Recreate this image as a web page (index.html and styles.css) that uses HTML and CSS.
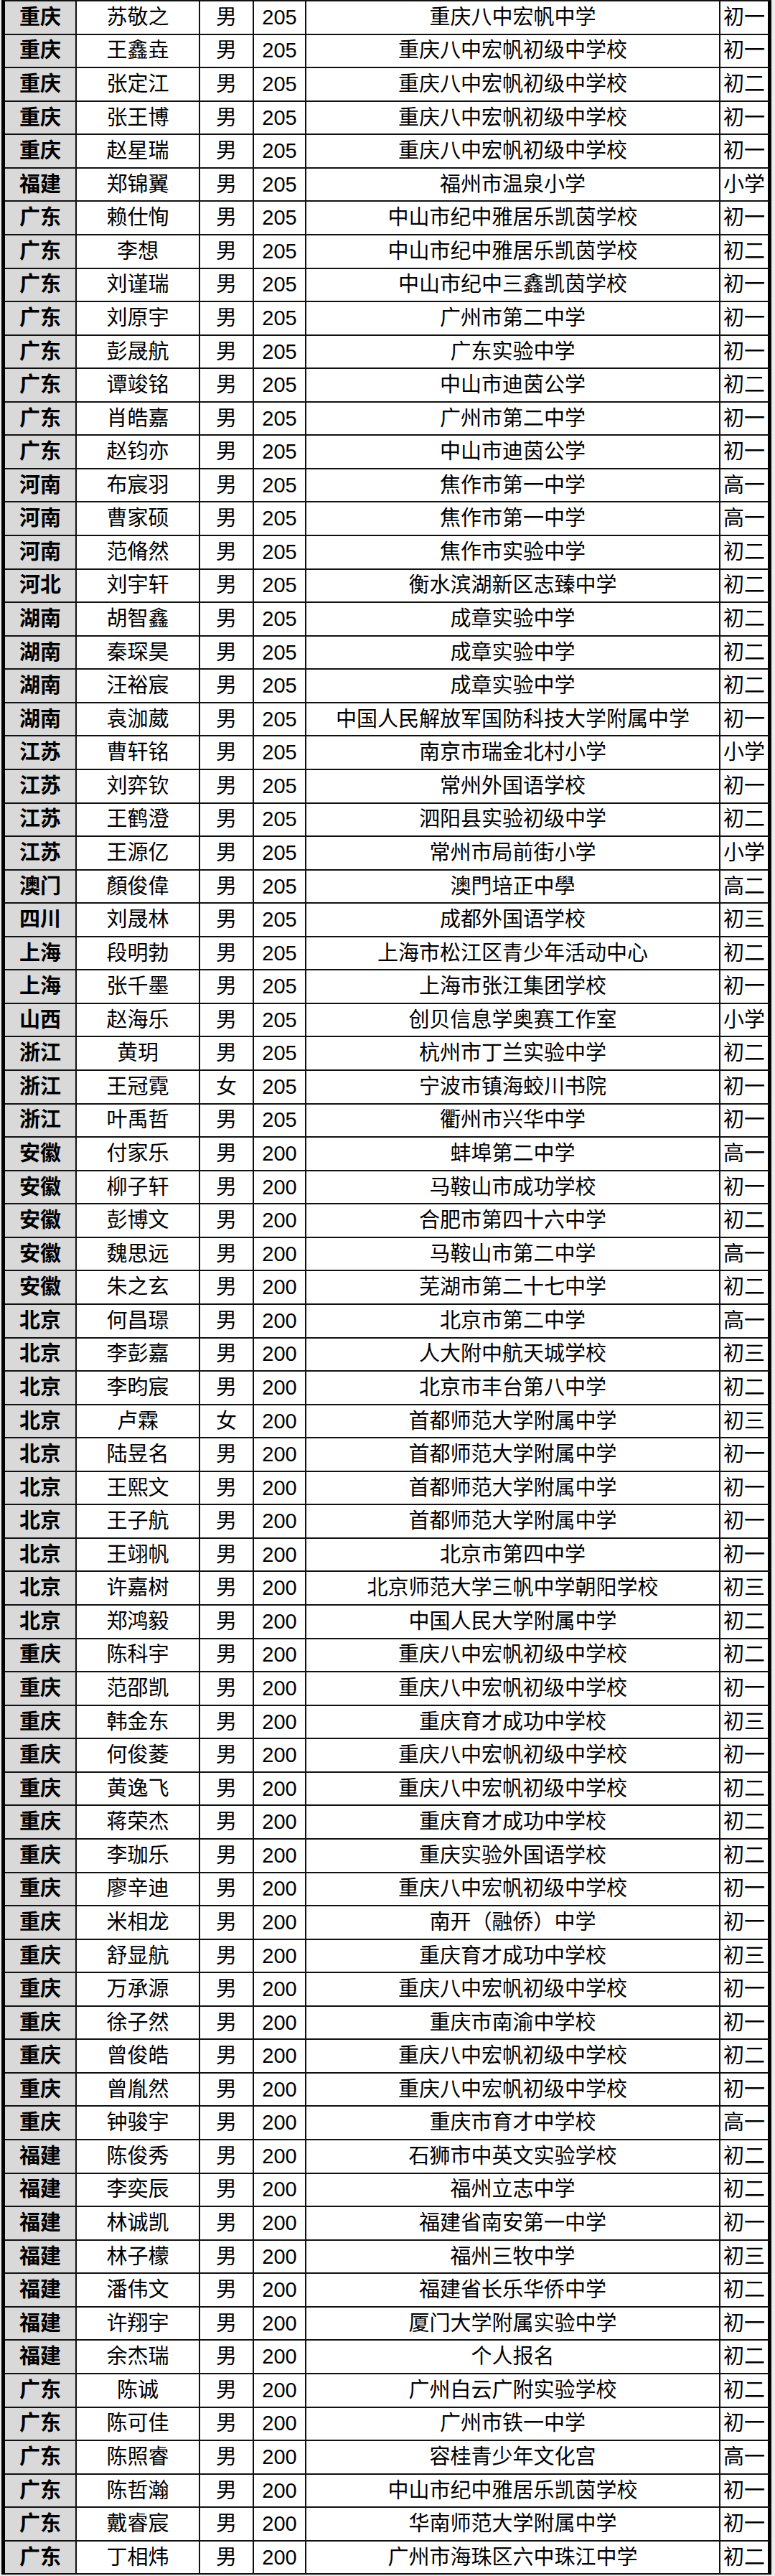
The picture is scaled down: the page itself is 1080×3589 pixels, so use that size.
FILE: index.html
```html
<!DOCTYPE html>
<html lang="zh-CN">
<head>
<meta charset="utf-8">
<title>名单</title>
<link rel="stylesheet" href="styles.css">
</head>
<body>
<table class="list">
<colgroup>
<col class="c-prov"><col class="c-name"><col class="c-sex"><col class="c-score"><col class="c-school"><col class="c-grade">
</colgroup>
<tbody>
<tr><td class="prov">重庆</td><td>苏敬之</td><td>男</td><td class="num">205</td><td>重庆八中宏帆中学</td><td class="grade">初一</td></tr>
<tr><td class="prov">重庆</td><td>王鑫垚</td><td>男</td><td class="num">205</td><td>重庆八中宏帆初级中学校</td><td class="grade">初一</td></tr>
<tr><td class="prov">重庆</td><td>张定江</td><td>男</td><td class="num">205</td><td>重庆八中宏帆初级中学校</td><td class="grade">初二</td></tr>
<tr><td class="prov">重庆</td><td>张王博</td><td>男</td><td class="num">205</td><td>重庆八中宏帆初级中学校</td><td class="grade">初一</td></tr>
<tr><td class="prov">重庆</td><td>赵星瑞</td><td>男</td><td class="num">205</td><td>重庆八中宏帆初级中学校</td><td class="grade">初一</td></tr>
<tr><td class="prov">福建</td><td>郑锦翼</td><td>男</td><td class="num">205</td><td>福州市温泉小学</td><td class="grade">小学</td></tr>
<tr><td class="prov">广东</td><td>赖仕恂</td><td>男</td><td class="num">205</td><td>中山市纪中雅居乐凯茵学校</td><td class="grade">初一</td></tr>
<tr><td class="prov">广东</td><td>李想</td><td>男</td><td class="num">205</td><td>中山市纪中雅居乐凯茵学校</td><td class="grade">初二</td></tr>
<tr><td class="prov">广东</td><td>刘谨瑞</td><td>男</td><td class="num">205</td><td>中山市纪中三鑫凯茵学校</td><td class="grade">初一</td></tr>
<tr><td class="prov">广东</td><td>刘原宇</td><td>男</td><td class="num">205</td><td>广州市第二中学</td><td class="grade">初一</td></tr>
<tr><td class="prov">广东</td><td>彭晟航</td><td>男</td><td class="num">205</td><td>广东实验中学</td><td class="grade">初一</td></tr>
<tr><td class="prov">广东</td><td>谭竣铭</td><td>男</td><td class="num">205</td><td>中山市迪茵公学</td><td class="grade">初二</td></tr>
<tr><td class="prov">广东</td><td>肖皓嘉</td><td>男</td><td class="num">205</td><td>广州市第二中学</td><td class="grade">初一</td></tr>
<tr><td class="prov">广东</td><td>赵钧亦</td><td>男</td><td class="num">205</td><td>中山市迪茵公学</td><td class="grade">初一</td></tr>
<tr><td class="prov">河南</td><td>布宸羽</td><td>男</td><td class="num">205</td><td>焦作市第一中学</td><td class="grade">高一</td></tr>
<tr><td class="prov">河南</td><td>曹家硕</td><td>男</td><td class="num">205</td><td>焦作市第一中学</td><td class="grade">高一</td></tr>
<tr><td class="prov">河南</td><td>范脩然</td><td>男</td><td class="num">205</td><td>焦作市实验中学</td><td class="grade">初二</td></tr>
<tr><td class="prov">河北</td><td>刘宇轩</td><td>男</td><td class="num">205</td><td>衡水滨湖新区志臻中学</td><td class="grade">初二</td></tr>
<tr><td class="prov">湖南</td><td>胡智鑫</td><td>男</td><td class="num">205</td><td>成章实验中学</td><td class="grade">初二</td></tr>
<tr><td class="prov">湖南</td><td>秦琛昊</td><td>男</td><td class="num">205</td><td>成章实验中学</td><td class="grade">初二</td></tr>
<tr><td class="prov">湖南</td><td>汪裕宸</td><td>男</td><td class="num">205</td><td>成章实验中学</td><td class="grade">初二</td></tr>
<tr><td class="prov">湖南</td><td>袁泇葳</td><td>男</td><td class="num">205</td><td>中国人民解放军国防科技大学附属中学</td><td class="grade">初一</td></tr>
<tr><td class="prov">江苏</td><td>曹轩铭</td><td>男</td><td class="num">205</td><td>南京市瑞金北村小学</td><td class="grade">小学</td></tr>
<tr><td class="prov">江苏</td><td>刘弈钦</td><td>男</td><td class="num">205</td><td>常州外国语学校</td><td class="grade">初一</td></tr>
<tr><td class="prov">江苏</td><td>王鹤澄</td><td>男</td><td class="num">205</td><td>泗阳县实验初级中学</td><td class="grade">初二</td></tr>
<tr><td class="prov">江苏</td><td>王源亿</td><td>男</td><td class="num">205</td><td>常州市局前街小学</td><td class="grade">小学</td></tr>
<tr><td class="prov">澳门</td><td>顏俊偉</td><td>男</td><td class="num">205</td><td>澳門培正中學</td><td class="grade">高二</td></tr>
<tr><td class="prov">四川</td><td>刘晟林</td><td>男</td><td class="num">205</td><td>成都外国语学校</td><td class="grade">初三</td></tr>
<tr><td class="prov">上海</td><td>段明勃</td><td>男</td><td class="num">205</td><td>上海市松江区青少年活动中心</td><td class="grade">初二</td></tr>
<tr><td class="prov">上海</td><td>张千墨</td><td>男</td><td class="num">205</td><td>上海市张江集团学校</td><td class="grade">初一</td></tr>
<tr><td class="prov">山西</td><td>赵海乐</td><td>男</td><td class="num">205</td><td>创贝信息学奥赛工作室</td><td class="grade">小学</td></tr>
<tr><td class="prov">浙江</td><td>黄玥</td><td>男</td><td class="num">205</td><td>杭州市丁兰实验中学</td><td class="grade">初二</td></tr>
<tr><td class="prov">浙江</td><td>王冠霓</td><td>女</td><td class="num">205</td><td>宁波市镇海蛟川书院</td><td class="grade">初一</td></tr>
<tr><td class="prov">浙江</td><td>叶禹哲</td><td>男</td><td class="num">205</td><td>衢州市兴华中学</td><td class="grade">初一</td></tr>
<tr><td class="prov">安徽</td><td>付家乐</td><td>男</td><td class="num">200</td><td>蚌埠第二中学</td><td class="grade">高一</td></tr>
<tr><td class="prov">安徽</td><td>柳子轩</td><td>男</td><td class="num">200</td><td>马鞍山市成功学校</td><td class="grade">初一</td></tr>
<tr><td class="prov">安徽</td><td>彭博文</td><td>男</td><td class="num">200</td><td>合肥市第四十六中学</td><td class="grade">初二</td></tr>
<tr><td class="prov">安徽</td><td>魏思远</td><td>男</td><td class="num">200</td><td>马鞍山市第二中学</td><td class="grade">高一</td></tr>
<tr><td class="prov">安徽</td><td>朱之玄</td><td>男</td><td class="num">200</td><td>芜湖市第二十七中学</td><td class="grade">初二</td></tr>
<tr><td class="prov">北京</td><td>何昌璟</td><td>男</td><td class="num">200</td><td>北京市第二中学</td><td class="grade">高一</td></tr>
<tr><td class="prov">北京</td><td>李彭嘉</td><td>男</td><td class="num">200</td><td>人大附中航天城学校</td><td class="grade">初三</td></tr>
<tr><td class="prov">北京</td><td>李昀宸</td><td>男</td><td class="num">200</td><td>北京市丰台第八中学</td><td class="grade">初二</td></tr>
<tr><td class="prov">北京</td><td>卢霖</td><td>女</td><td class="num">200</td><td>首都师范大学附属中学</td><td class="grade">初三</td></tr>
<tr><td class="prov">北京</td><td>陆昱名</td><td>男</td><td class="num">200</td><td>首都师范大学附属中学</td><td class="grade">初一</td></tr>
<tr><td class="prov">北京</td><td>王熙文</td><td>男</td><td class="num">200</td><td>首都师范大学附属中学</td><td class="grade">初一</td></tr>
<tr><td class="prov">北京</td><td>王子航</td><td>男</td><td class="num">200</td><td>首都师范大学附属中学</td><td class="grade">初一</td></tr>
<tr><td class="prov">北京</td><td>王翊帆</td><td>男</td><td class="num">200</td><td>北京市第四中学</td><td class="grade">初一</td></tr>
<tr><td class="prov">北京</td><td>许嘉树</td><td>男</td><td class="num">200</td><td>北京师范大学三帆中学朝阳学校</td><td class="grade">初三</td></tr>
<tr><td class="prov">北京</td><td>郑鸿毅</td><td>男</td><td class="num">200</td><td>中国人民大学附属中学</td><td class="grade">初二</td></tr>
<tr><td class="prov">重庆</td><td>陈科宇</td><td>男</td><td class="num">200</td><td>重庆八中宏帆初级中学校</td><td class="grade">初二</td></tr>
<tr><td class="prov">重庆</td><td>范邵凯</td><td>男</td><td class="num">200</td><td>重庆八中宏帆初级中学校</td><td class="grade">初一</td></tr>
<tr><td class="prov">重庆</td><td>韩金东</td><td>男</td><td class="num">200</td><td>重庆育才成功中学校</td><td class="grade">初三</td></tr>
<tr><td class="prov">重庆</td><td>何俊菱</td><td>男</td><td class="num">200</td><td>重庆八中宏帆初级中学校</td><td class="grade">初一</td></tr>
<tr><td class="prov">重庆</td><td>黄逸飞</td><td>男</td><td class="num">200</td><td>重庆八中宏帆初级中学校</td><td class="grade">初二</td></tr>
<tr><td class="prov">重庆</td><td>蒋荣杰</td><td>男</td><td class="num">200</td><td>重庆育才成功中学校</td><td class="grade">初二</td></tr>
<tr><td class="prov">重庆</td><td>李珈乐</td><td>男</td><td class="num">200</td><td>重庆实验外国语学校</td><td class="grade">初二</td></tr>
<tr><td class="prov">重庆</td><td>廖辛迪</td><td>男</td><td class="num">200</td><td>重庆八中宏帆初级中学校</td><td class="grade">初一</td></tr>
<tr><td class="prov">重庆</td><td>米相龙</td><td>男</td><td class="num">200</td><td>南开（融侨）中学</td><td class="grade">初一</td></tr>
<tr><td class="prov">重庆</td><td>舒显航</td><td>男</td><td class="num">200</td><td>重庆育才成功中学校</td><td class="grade">初三</td></tr>
<tr><td class="prov">重庆</td><td>万承源</td><td>男</td><td class="num">200</td><td>重庆八中宏帆初级中学校</td><td class="grade">初一</td></tr>
<tr><td class="prov">重庆</td><td>徐子然</td><td>男</td><td class="num">200</td><td>重庆市南渝中学校</td><td class="grade">初一</td></tr>
<tr><td class="prov">重庆</td><td>曾俊皓</td><td>男</td><td class="num">200</td><td>重庆八中宏帆初级中学校</td><td class="grade">初二</td></tr>
<tr><td class="prov">重庆</td><td>曾胤然</td><td>男</td><td class="num">200</td><td>重庆八中宏帆初级中学校</td><td class="grade">初一</td></tr>
<tr><td class="prov">重庆</td><td>钟骏宇</td><td>男</td><td class="num">200</td><td>重庆市育才中学校</td><td class="grade">高一</td></tr>
<tr><td class="prov">福建</td><td>陈俊秀</td><td>男</td><td class="num">200</td><td>石狮市中英文实验学校</td><td class="grade">初二</td></tr>
<tr><td class="prov">福建</td><td>李奕辰</td><td>男</td><td class="num">200</td><td>福州立志中学</td><td class="grade">初二</td></tr>
<tr><td class="prov">福建</td><td>林诚凯</td><td>男</td><td class="num">200</td><td>福建省南安第一中学</td><td class="grade">初一</td></tr>
<tr><td class="prov">福建</td><td>林子檬</td><td>男</td><td class="num">200</td><td>福州三牧中学</td><td class="grade">初三</td></tr>
<tr><td class="prov">福建</td><td>潘伟文</td><td>男</td><td class="num">200</td><td>福建省长乐华侨中学</td><td class="grade">初二</td></tr>
<tr><td class="prov">福建</td><td>许翔宇</td><td>男</td><td class="num">200</td><td>厦门大学附属实验中学</td><td class="grade">初一</td></tr>
<tr><td class="prov">福建</td><td>余杰瑞</td><td>男</td><td class="num">200</td><td>个人报名</td><td class="grade">初二</td></tr>
<tr><td class="prov">广东</td><td>陈诚</td><td>男</td><td class="num">200</td><td>广州白云广附实验学校</td><td class="grade">初二</td></tr>
<tr><td class="prov">广东</td><td>陈可佳</td><td>男</td><td class="num">200</td><td>广州市铁一中学</td><td class="grade">初一</td></tr>
<tr><td class="prov">广东</td><td>陈照睿</td><td>男</td><td class="num">200</td><td>容桂青少年文化宫</td><td class="grade">高一</td></tr>
<tr><td class="prov">广东</td><td>陈哲瀚</td><td>男</td><td class="num">200</td><td>中山市纪中雅居乐凯茵学校</td><td class="grade">初一</td></tr>
<tr><td class="prov">广东</td><td>戴睿宸</td><td>男</td><td class="num">200</td><td>华南师范大学附属中学</td><td class="grade">初一</td></tr>
<tr><td class="prov">广东</td><td>丁相炜</td><td>男</td><td class="num">200</td><td>广州市海珠区六中珠江中学</td><td class="grade">初二</td></tr>
</tbody>
</table>
</body>
</html>
```

FILE: styles.css
```css
html, body {
  margin: 0;
  padding: 0;
  background: #ededed;
}

.list {
  margin: 0 0 0 2px;
  border-collapse: separate;
  border-spacing: 0;
  table-layout: fixed;
  width: 1073px;
  border-left: 5px solid #000;
  border-top: 2px solid #111;
  background: #fff;
  font-family: "Liberation Sans", "Noto Sans CJK SC", sans-serif;
  font-size: 29px;
  color: #000;
}

.c-prov { width: 100px; }
.c-name { width: 172px; }
.c-sex { width: 75px; }
.c-score { width: 73px; }
.c-school { width: 577px; }
.c-grade { width: 71px; }

.list tr {
  height: 46.57px;
}

.list td {
  padding: 0;
  border-right: 2px solid #111;
  border-bottom: 2px solid #111;
  text-align: center;
  vertical-align: middle;
  line-height: 1.2;
  white-space: nowrap;
  overflow: hidden;
}

.list td.prov {
  background: #d9d9d9;
  font-weight: 700;
}

.list td.grade {
  border-right: 5px solid #000;
}
```
